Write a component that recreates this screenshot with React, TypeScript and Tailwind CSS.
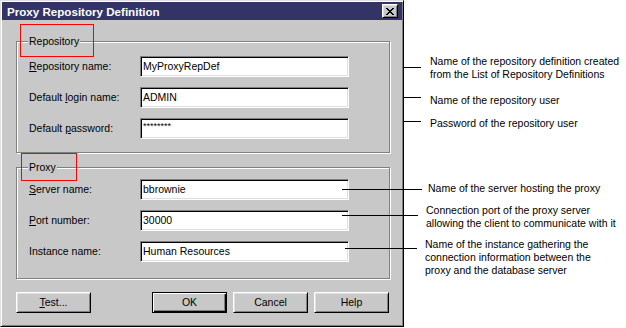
import React from "react";

const raised =
    "border border-t-white border-l-white border-r-black border-b-black shadow-[inset_1px_1px_0_#dfdfdf,inset_-1px_-1px_0_#808080]";
const sunken =
    "border border-t-[#808080] border-l-[#808080] border-r-white border-b-white shadow-[inset_1px_1px_0_black,inset_-1px_-1px_0_#dfdfdf]";
const etched = "relative border border-[#808080] shadow-[inset_1px_1px_0_white,1px_1px_0_white]";

interface IFieldProps {
    label: React.ReactNode
    value: string
    small?: boolean
}

const Field: React.FC<IFieldProps> = ({ label, value, small }) => (
    <div className="flex items-center h-[21px]">
        <span className="w-[111px] shrink-0">{label}</span>
        <div className={`${sunken} w-[209px] h-[21px] bg-white pl-[2px] flex ${small ? "items-start pt-[2px] text-[9px] leading-[10px]" : "items-center"}`}>
            {value}
        </div>
    </div>
)

interface INoteProps {
    top: string
    lineTop: string
    lineClass: string
    textClass: string
    lines: string[]
}

const Note: React.FC<INoteProps> = ({ top, lineTop, lineClass, textClass, lines }) => (
    <div className={`flex ${top}`}>
        <div className={`relative h-px bg-black shrink-0 ${lineTop} ${lineClass}`}/>
        <div className={`flex flex-col whitespace-nowrap ${textClass}`}>
            {lines.map((l) => <span key={l}>{l}</span>)}
        </div>
    </div>
)

const App: React.FC = () => {
    return (
        <div className="flex w-[626px] h-[328px] bg-white text-black text-[10.5px] leading-[13px] font-['Liberation_Sans',Arial,sans-serif]">
            {/* dialog */}
            <div className="relative w-[404px] h-[327px] shrink-0 bg-[#c8c8c8] border border-t-[#dfdfdf] border-l-[#dfdfdf] border-r-black border-b-black shadow-[inset_1px_1px_0_white,inset_-1px_-1px_0_#808080] p-px">
                <div className="flex items-center h-[18px] bg-[#333366] pl-[5px] pr-[4px]">
                    <span className="text-white font-bold text-[11.6px]">Proxy Repository Definition</span>
                    <div className={`${raised} ml-auto w-[16px] h-[14px] bg-[#c8c8c8] flex items-center justify-center`}>
                        <svg width="8" height="7" viewBox="0 0 8 7" shapeRendering="crispEdges">
                            <path d="M0 0h2v1h-2zM6 0h2v1h-2zM1 1h2v1h-2zM5 1h2v1h-2zM2 2h4v1h-4zM3 3h2v1h-2zM2 4h4v1h-4zM1 5h2v1h-2zM5 5h2v1h-2zM0 6h2v1h-2zM6 6h2v1h-2z" fill="black"/>
                        </svg>
                    </div>
                </div>

                <div className="px-[14px] pr-[12px]">
                    <div className={`${etched} mt-[21px] pl-[12px] pt-[14px] pb-[13px]`}>
                        <span className="absolute left-[11px] top-[-7px] px-[1px] bg-[#c8c8c8]">Repository</span>
                        <div className="absolute left-[3px] top-[-18px] w-[74px] h-[33px] border border-[#ff0000]"/>
                        <div className="flex flex-col gap-[10px]">
                            <Field label={<><u>R</u>epository name:</>} value="MyProxyRepDef"/>
                            <Field label={<>Default <u>l</u>ogin name:</>} value="ADMIN"/>
                            <Field label={<>Default <u>p</u>assword:</>} value="********" small/>
                        </div>
                    </div>

                    <div className={`${etched} mt-[14px] pl-[12px] pt-[11px] pb-[16px]`}>
                        <span className="absolute left-[11px] top-[-7px] px-[1px] bg-[#c8c8c8]">Proxy</span>
                        <div className="absolute left-[4px] top-[-15px] w-[56px] h-[28px] border border-[#ff0000]"/>
                        <div className="flex flex-col gap-[10px]">
                            <Field label={<><u>S</u>erver name:</>} value="bbrownie"/>
                            <Field label={<><u>P</u>ort number:</>} value="30000"/>
                            <Field label="Instance name:" value="Human Resources"/>
                        </div>
                    </div>

                    <div className="flex mt-[13px]">
                        <button className={`${raised} w-[75px] h-[21px] bg-[#c8c8c8]`}><u>T</u>est...</button>
                        <button className="ml-[61px] w-[75px] h-[21px] bg-[#c8c8c8] border border-black shadow-[inset_1px_1px_0_white,inset_-1px_-1px_0_black,inset_-2px_-2px_0_#808080]">OK</button>
                        <button className={`${raised} ml-[6px] w-[75px] h-[21px] bg-[#c8c8c8]`}>Cancel</button>
                        <button className={`${raised} ml-[6px] w-[75px] h-[21px] bg-[#c8c8c8]`}>Help</button>
                    </div>
                </div>
            </div>

            {/* annotations */}
            <div className="flex flex-col">
                <Note top="mt-[55px]" lineTop="mt-[12px]" lineClass="w-[17px]" textClass="ml-[9px]"
                      lines={["Name of the repository definition created", "from the List of Repository Definitions"]}/>
                <Note top="mt-[13px]" lineTop="mt-[3px]" lineClass="w-[17px]" textClass="ml-[9px]"
                      lines={["Name of the repository user"]}/>
                <Note top="mt-[10px]" lineTop="mt-[4px]" lineClass="w-[17px]" textClass="ml-[9px]"
                      lines={["Password of the repository user"]}/>
                <Note top="mt-[52px]" lineTop="mt-[7px]" lineClass="ml-[-62px] w-[80px]" textClass="ml-[6px]"
                      lines={["Name of the server hosting the proxy"]}/>
                <Note top="mt-[9px]" lineTop="mt-[11px]" lineClass="ml-[-62px] w-[76px]" textClass="ml-[8px]"
                      lines={["Connection port of the proxy server", "allowing the client to communicate with it"]}/>
                <Note top="mt-[8px]" lineTop="mt-[10px]" lineClass="ml-[-59px] w-[72px]" textClass="ml-[8px]"
                      lines={["Name of the instance gathering the", "connection information between the", "proxy and the database server"]}/>
            </div>
        </div>
    )
}

export default App
